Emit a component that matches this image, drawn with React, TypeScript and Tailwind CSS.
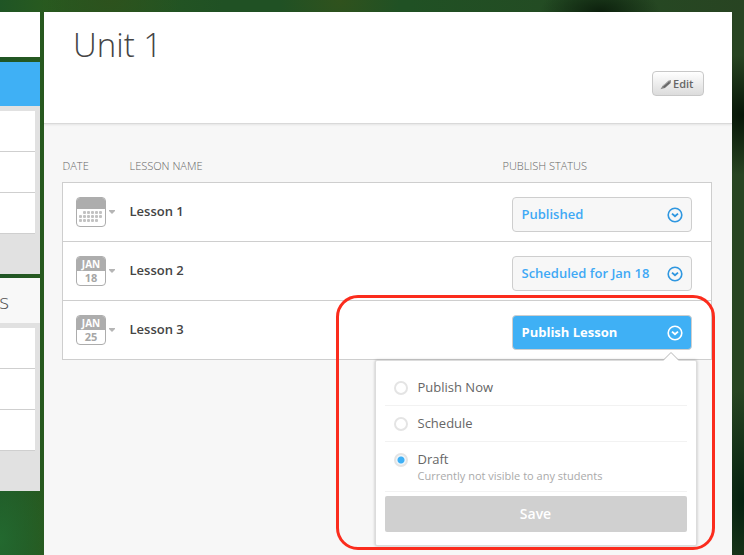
import { useState } from "react";

type Lesson = { name: string; month?: string; day?: string; status: string; open?: boolean };

const lessons: Lesson[] = [
  { name: "Lesson 1", status: "Published" },
  { name: "Lesson 2", month: "JAN", day: "18", status: "Scheduled for Jan 18" },
  { name: "Lesson 3", month: "JAN", day: "25", status: "Publish Lesson", open: true },
];

const options = [
  { id: "now", label: "Publish Now" },
  { id: "schedule", label: "Schedule" },
  { id: "draft", label: "Draft", note: "Currently not visible to any students" },
];

function PencilIcon() {
  return (
    <svg width="12" height="11" viewBox="0 0 12 11" aria-hidden="true">
      <path d="M0.5 10.300 2.600 6.800 8.400 1.800 11 1 10.800 4 5 8.900Z" fill="#8a8a8a" />
      <path d="M3.600 8.300 9.500 3.400" stroke="#666" strokeWidth="1.500" />
      <path d="M3 6.800 8.400 2.200" stroke="#bbb" strokeWidth="0.800" />
    </svg>
  );
}

function ChevronCircle() {
  return (
    <svg width="16" height="16" viewBox="0 0 16 16" fill="none" stroke="currentColor" aria-hidden="true">
      <circle cx="8" cy="8" r="6.8" strokeWidth="1.6" />
      <path d="M5 6.600 8 9.300 11 6.600" strokeWidth="1.900" />
    </svg>
  );
}

function DotGrid() {
  const rows = [
    [4, 8, 12, 16, 20],
    [0, 4, 8, 12, 16, 20],
    [0, 4, 8, 12, 16],
  ];
  return (
    <svg width="24" height="12" viewBox="0 0 24 12" fill="#c2c2c2" aria-hidden="true">
      {rows.map((xs, r) => xs.map((x) => <rect key={`${r}-${x}`} x={x} y={r * 4} width="3" height="3" rx="1" />))}
    </svg>
  );
}

function DateButton({ lesson }: { lesson: Lesson }) {
  return (
    <button type="button" aria-label={`Date of ${lesson.name}`} className="flex items-center gap-[3px]">
      <span className="flex size-[30px] flex-col overflow-hidden rounded border border-[#adadad] bg-white text-center font-bold">
        {lesson.month ? (
          <>
            <span className="h-[14px] bg-[#adadad] text-[10px] leading-[14px] text-white">{lesson.month}</span>
            <span className="text-[11px] leading-[14px] text-[#a6a6a6]">{lesson.day}</span>
          </>
        ) : (
          <>
            <span className="h-[11px] bg-[#adadad]" />
            <span className="flex flex-1 items-center justify-center">
              <DotGrid />
            </span>
          </>
        )}
      </span>
      <svg width="6" height="4" viewBox="0 0 6 4" aria-hidden="true">
        <path d="M0 0H6V1L3 4 0 1Z" fill="#b5b5b5" />
      </svg>
    </button>
  );
}

function PublishMenu() {
  const [choice, setChoice] = useState("draft");
  return (
    <>
      <form
        className="absolute -right-[5px] top-[45px] z-10 w-[322px] rounded-xs border border-[#dcdcdc] bg-white px-[9px] pb-[13px] pt-[9px] shadow-[0_0_3px_rgba(0,0,0,0.25)]"
        onSubmit={(e) => e.preventDefault()}
      >
        <svg className="absolute -top-[9px] right-[17px]" width="16" height="10" viewBox="0 0 16 10" aria-hidden="true">
          <path d="M0 10V8.500L8 0.500 16 8.500V10Z" fill="#fff" />
          <path d="M0 8.500 8 0.500 16 8.500" fill="none" stroke="#b5b5b5" />
        </svg>
        {options.map((o) => (
          <label key={o.id} htmlFor={o.id} className="flex gap-[10px] border-b border-[#f2f2f2] py-2 pl-[9px]">
            <input
              id={o.id}
              type="radio"
              name="publish"
              checked={choice === o.id}
              onChange={() => setChoice(o.id)}
              className="mt-[3px] size-[14px] shrink-0 appearance-none rounded-full border-2 border-[#e4e4e4] bg-white checked:bg-[radial-gradient(circle,#3fb0f5_0_3px,#eef6fb_4px)]"
            />
            <span className="flex flex-col">
              <span className="text-[13px] leading-[19px] text-[#666]">{o.label}</span>
              {o.note && <span className="text-[11px] leading-[14px] text-[#aaa]">{o.note}</span>}
            </span>
          </label>
        ))}
        <button type="submit" className="mt-1 h-9 w-full rounded-xs bg-[#d0d0d0] text-sm font-semibold text-white">
          Save
        </button>
      </form>
      <div className="pointer-events-none absolute -right-[23px] -top-5 z-20 h-[255px] w-[379px] rounded-[22px] border-3 border-[#fb2c1d]" />
    </>
  );
}

function SideList() {
  return (
    <div className="bg-[#e1e1e1] pb-10 pr-[5px] pt-[5px]">
      <ul>
        {[1, 2, 3].map((n) => (
          <li key={n} className="h-[41px] border-b border-[#cfcfcf] bg-white" />
        ))}
      </ul>
    </div>
  );
}

export default function App() {
  return (
    <div className="flex min-h-screen gap-1 bg-[#1f5223] bg-[radial-gradient(ellipse_60px_30px_at_600px_12px,#0c200d,transparent),radial-gradient(ellipse_70px_60px_at_744px_115px,#061507,transparent),radial-gradient(ellipse_50px_110px_at_744px_500px,#04200f,transparent),radial-gradient(ellipse_70px_60px_at_110px_0px,#2d521d,transparent),radial-gradient(ellipse_60px_60px_at_340px_0px,#30521d,transparent),radial-gradient(ellipse_50px_90px_at_0px_540px,#23692f,transparent),linear-gradient(90deg,#1f5525_0%,#285a1f_6%,#205124_30%,#205124_55%,#284422_100%)] pt-3 font-['Open_Sans','Noto_Sans',sans-serif]">
      <aside className="w-10 shrink-0">
        <div className="h-[45px] bg-white" />
        <div className="mt-[5px] h-11 bg-[#3fb0f5]" />
        <SideList />
        <div className="mt-1 flex h-[45px] items-center justify-end overflow-hidden bg-[#f8f8f8] pr-[31px]">
          <h2 className="text-[21px] font-light leading-7 text-[#555]">ns</h2>
        </div>
        <SideList />
      </aside>
      <main className="mr-3 min-w-0 flex-1 bg-[#f7f7f7]">
        <header className="flex h-28 flex-col border-b border-[#d9d9d9] bg-white pl-[29px] pr-7 pt-[10px] shadow-[0_1px_2px_rgba(0,0,0,0.08)]">
          <h1 className="text-[33px] font-light leading-[46px] text-[#444]">Unit 1</h1>
          <button
            type="button"
            className="mt-[3px] flex h-[25px] w-[52px] items-center gap-px self-end rounded border border-[#c8c8c8] bg-linear-to-b from-white to-[#dcdcdc] pl-[7px] pt-px text-[11px] font-semibold text-[#666]"
          >
            <PencilIcon />
            Edit
          </button>
        </header>
        <div className="pl-[18px] pr-5 pt-8">
          <table className="w-full table-fixed border-collapse text-left">
            <thead>
              <tr className="h-[26px] align-top text-[11px] leading-5 text-[#666]">
                <th className="w-[67px] font-light">DATE</th>
                <th className="font-light">LESSON NAME</th>
                <th className="w-[209px] font-light">PUBLISH STATUS</th>
              </tr>
            </thead>
            <tbody className="border border-[#cecece] bg-white align-top">
              {lessons.map((l) => (
                <tr key={l.name} className="h-[59px] border-b border-[#cecece]">
                  <td className="pl-[13px] pt-[14px]">
                    <DateButton lesson={l} />
                  </td>
                  <td className="pt-[18px] text-[13px] font-semibold leading-5 text-[#444]">{l.name}</td>
                  <td className="pl-[9px] pt-[14px]">
                    <div className="relative w-[180px]">
                      <button
                        type="button"
                        aria-haspopup="true"
                        aria-expanded={!!l.open}
                        className={`flex h-[35px] w-full items-center justify-between rounded border border-[#cecece] pl-[9px] pr-2 pt-px text-[13px] ${
                          l.open ? "bg-[#3fb0f5] font-bold text-white" : "bg-[#f7f7f7] font-semibold text-[#3fa9f5]"
                        }`}
                      >
                        {l.status}
                        <span className={l.open ? "text-white" : "text-[#2f97e0]"}>
                          <ChevronCircle />
                        </span>
                      </button>
                      {l.open && <PublishMenu />}
                    </div>
                  </td>
                </tr>
              ))}
            </tbody>
          </table>
        </div>
      </main>
    </div>
  );
}
